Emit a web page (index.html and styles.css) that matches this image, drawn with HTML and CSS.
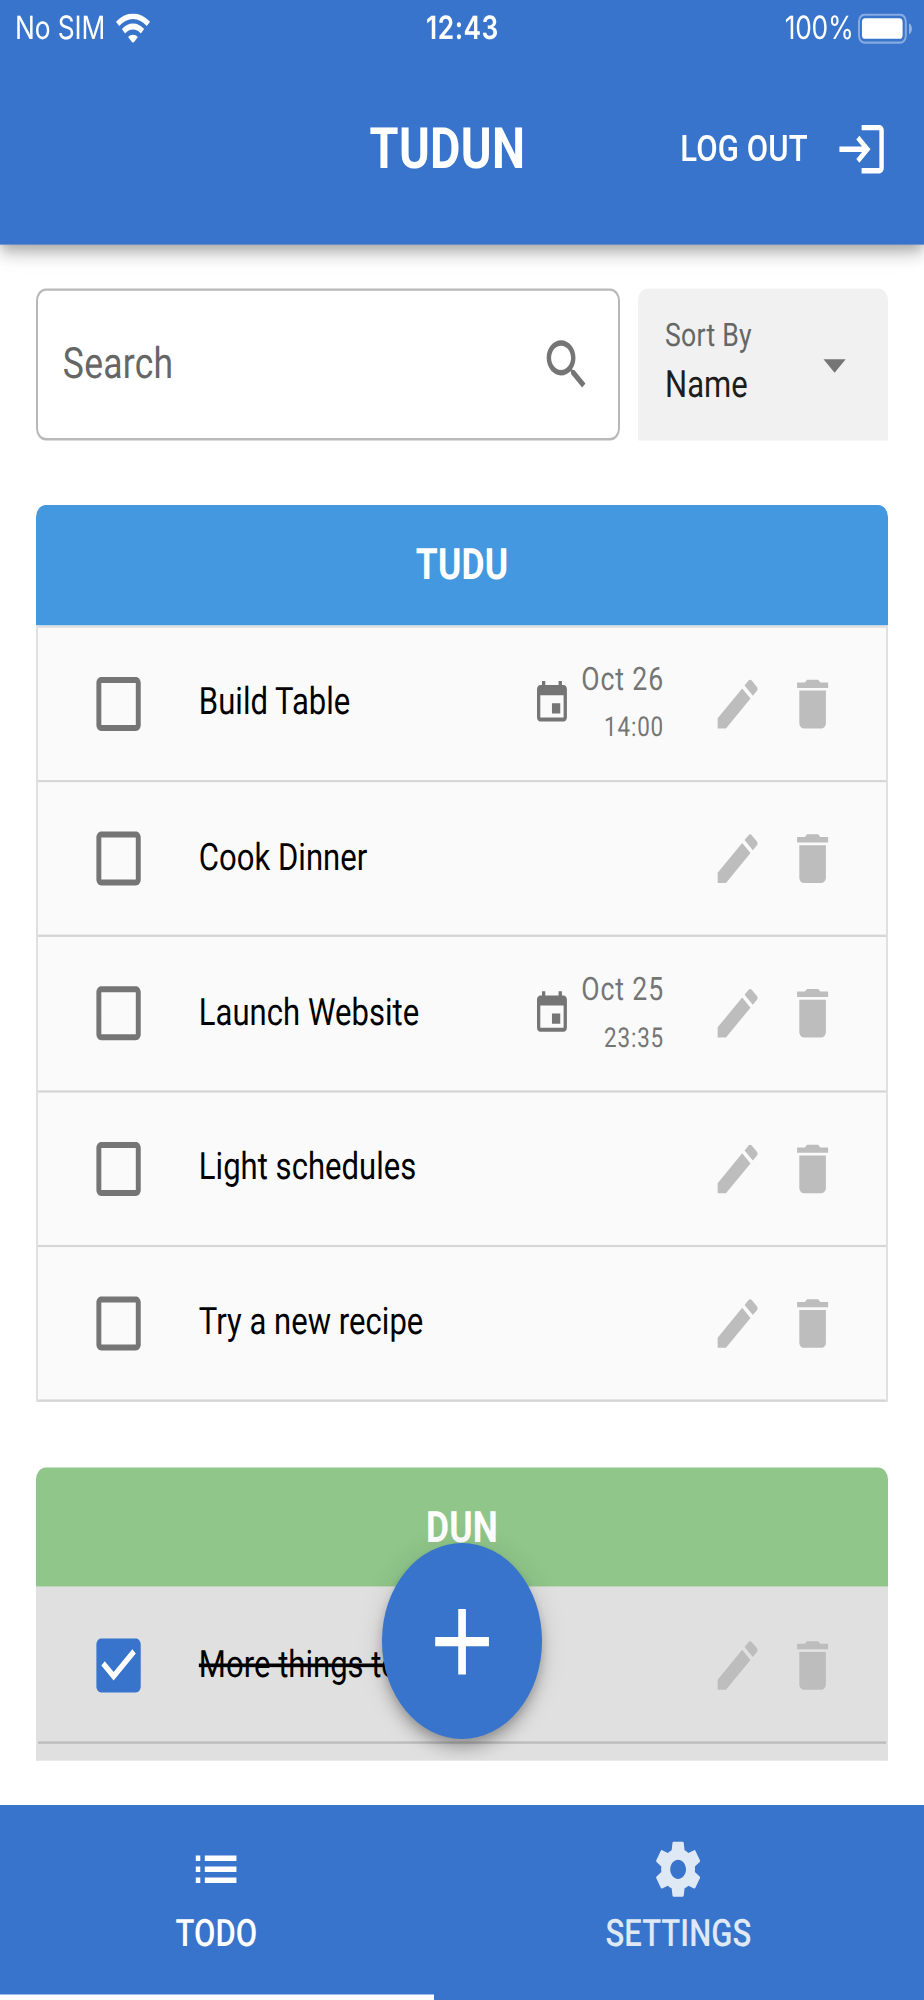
FILE: index.html
```html
<!DOCTYPE html>
<html lang="en">
<head>
<meta charset="utf-8">
<title>TUDUN</title>
<link rel="stylesheet" href="styles.css">
</head>
<body>
<svg class="sprite" xmlns="http://www.w3.org/2000/svg">
  <symbol id="box" viewBox="0 0 24 24"><path d="M19 5v14H5V5h14m0-2H5c-1.1 0-2 .9-2 2v14c0 1.1.9 2 2 2h14c1.1 0 2-.9 2-2V5c0-1.1-.9-2-2-2z"/></symbol>
  <symbol id="box-checked" viewBox="0 0 24 24"><path fill="#fff" d="M4 4h16v16H4z"/><path d="M19 3H5c-1.11 0-2 .9-2 2v14c0 1.1.89 2 2 2h14c1.11 0 2-.9 2-2V5c0-1.1-.89-2-2-2zm-9 14l-5-5 1.41-1.41L10 14.17l7.59-7.59L19 8l-9 9z"/></symbol>
  <symbol id="edit" viewBox="0 0 24 24"><path d="M3 17.25V21h3.75L17.81 9.94l-3.75-3.75L3 17.25zM20.71 7.04c.39-.39.39-1.02 0-1.41l-2.34-2.34c-.39-.39-1.02-.39-1.41 0l-1.83 1.83 3.75 3.75 1.83-1.83z"/></symbol>
  <symbol id="delete" viewBox="0 0 24 24"><path d="M6 19c0 1.1.9 2 2 2h8c1.1 0 2-.9 2-2V7H6v12zM19 4h-3.5l-1-1h-5l-1 1H5v2h14V4z"/></symbol>
  <symbol id="event" viewBox="0 0 24 24"><path d="M17 12h-5v5h5v-5zM16 1v2H8V1H6v2H5c-1.11 0-1.99.9-1.99 2L3 19c0 1.1.89 2 2 2h14c1.1 0 2-.9 2-2V5c0-1.1-.9-2-2-2h-1V1h-2zm3 18H5V8h14v11z"/></symbol>
</svg>
<div class="viewport">
<div class="app">
  <header class="appbar">
    <div class="status">
      <div class="status-left">
        <span class="carrier">No SIM</span>
        <svg class="wifi" viewBox="0 0 13.8 10"><path d="M6.9 10L4.9 7.9a2.9 2.9 0 0 1 4 0z"/><path d="M2.4 5.2a6.5 6.5 0 0 1 9 0L10.1 6.7a4.6 4.6 0 0 0-6.4 0z"/><path d="M0 2.8a10 10 0 0 1 13.8 0L12.5 4.2a8 8 0 0 0-11.2 0z"/></svg>
      </div>
      <span class="clock">12:43</span>
      <div class="status-right">
        <span class="percent">100%</span>
        <svg class="battery" viewBox="0 0 22 10.2"><rect x=".4" y=".4" width="19" height="9.4" rx="2.3" fill="none" stroke="#fff" stroke-opacity=".4" stroke-width=".8"/><rect x="1.6" y="1.6" width="16.5" height="6.9" rx="1.3"/><path d="M20.7 3.3c1.6.7 1.6 3 0 3.7z" fill-opacity=".45"/></svg>
      </div>
    </div>
    <div class="toolbar">
      <h1 class="title">TUDUN</h1>
      <button class="logout"><span>LOG OUT</span><svg class="icon" viewBox="0 0 24 24"><path d="M11 7L9.6 8.4l2.6 2.6H2v2h10.2l-2.6 2.6L11 17l5-5-5-5zm9 12h-8v2h8c1.1 0 2-.9 2-2V5c0-1.1-.9-2-2-2h-8v2h8v14z"/></svg></button>
    </div>
  </header>

  <main class="content">
    <div class="filters">
      <div class="search">
        <span>Search</span>
        <svg class="icon" viewBox="0 0 24 24"><path d="M15.5 14h-.79l-.28-.27C15.41 12.59 16 11.11 16 9.5 16 5.91 13.09 3 9.5 3S3 5.91 3 9.5 5.91 16 9.5 16c1.61 0 3.09-.59 4.23-1.57l.27.28v.79l5 4.99L20.49 19l-4.99-5zm-6 0C7.01 14 5 11.99 5 9.5S7.01 5 9.5 5 14 7.01 14 9.5 11.99 14 9.5 14z"/></svg>
      </div>
      <div class="sort">
        <div class="sort-text"><span class="sort-label">Sort By</span><span class="sort-value">Name</span></div>
        <svg class="icon" viewBox="0 0 24 24"><path d="M7 10l5 5 5-5z"/></svg>
      </div>
    </div>

    <section class="panel">
      <h2 class="panel-title">TUDU</h2>
      <ul class="tasks">
        <li class="task"><svg class="check"><use href="#box"/></svg><span class="name">Build Table</span><svg class="event"><use href="#event"/></svg><div class="due"><span class="date">Oct 26</span><span class="time">14:00</span></div><div class="actions"><svg class="icon"><use href="#edit"/></svg><svg class="icon"><use href="#delete"/></svg></div></li>
        <li class="task"><svg class="check"><use href="#box"/></svg><span class="name">Cook Dinner</span><div class="actions"><svg class="icon"><use href="#edit"/></svg><svg class="icon"><use href="#delete"/></svg></div></li>
        <li class="task"><svg class="check"><use href="#box"/></svg><span class="name">Launch Website</span><svg class="event"><use href="#event"/></svg><div class="due"><span class="date">Oct 25</span><span class="time">23:35</span></div><div class="actions"><svg class="icon"><use href="#edit"/></svg><svg class="icon"><use href="#delete"/></svg></div></li>
        <li class="task"><svg class="check"><use href="#box"/></svg><span class="name">Light schedules</span><div class="actions"><svg class="icon"><use href="#edit"/></svg><svg class="icon"><use href="#delete"/></svg></div></li>
        <li class="task"><svg class="check"><use href="#box"/></svg><span class="name">Try a new recipe</span><div class="actions"><svg class="icon"><use href="#edit"/></svg><svg class="icon"><use href="#delete"/></svg></div></li>
      </ul>
    </section>

    <section class="panel panel-done">
      <h2 class="panel-title">DUN</h2>
      <ul class="tasks">
        <li class="task"><svg class="check checked"><use href="#box-checked"/></svg><span class="name">More things to do</span><div class="actions"><svg class="icon"><use href="#edit"/></svg><svg class="icon"><use href="#delete"/></svg></div></li>
      </ul>
    </section>
  </main>

  <button class="fab" aria-label="Add"><svg viewBox="0 0 24 24"><path d="M19 13h-6v6h-2v-6H5v-2h6V5h2v6h6v2z"/></svg></button>

  <nav class="tabs">
    <div class="tab tab-active"><svg class="tab-icon" viewBox="0 0 24 24"><path d="M3 13h2v-2H3v2zm0 4h2v-2H3v2zm0-8h2V7H3v2zm4 4h14v-2H7v2zm0 4h14v-2H7v2zM7 7v2h14V7H7z"/></svg><span>TODO</span></div>
    <div class="tab"><svg class="tab-icon" viewBox="0 0 24 24"><path d="M19.43 12.98c.04-.32.07-.64.07-.98s-.03-.66-.07-.98l2.11-1.65c.19-.15.24-.42.12-.64l-2-3.46c-.12-.22-.39-.3-.61-.22l-2.49 1c-.52-.4-1.08-.73-1.69-.98l-.38-2.65C14.46 2.18 14.25 2 14 2h-4c-.25 0-.46.18-.49.42l-.38 2.65c-.61.25-1.17.59-1.69.98l-2.49-1c-.23-.09-.49 0-.61.22l-2 3.46c-.13.22-.07.49.12.64l2.11 1.65c-.04.32-.07.65-.07.98s.03.66.07.98l-2.11 1.65c-.19.15-.24.42-.12.64l2 3.46c.12.22.39.3.61.22l2.49-1c.52.4 1.08.73 1.69.98l.38 2.65c.03.24.24.42.49.42h4c.25 0 .46-.18.49-.42l.38-2.65c.61-.25 1.17-.59 1.69-.98l2.49 1c.23.09.49 0 .61-.22l2-3.46c.12-.22.07-.49-.12-.64l-2.11-1.65zM12 15.5c-1.93 0-3.5-1.57-3.5-3.5s1.57-3.5 3.5-3.5 3.5 1.57 3.5 3.5-1.57 3.5-3.5 3.5z"/></svg><span>SETTINGS</span></div>
  </nav>
</div>
</div>
</body>
</html>
```

FILE: styles.css
```css
* { box-sizing: border-box; margin: 0; padding: 0; }

body { background: #fff; }

.sprite { display: none; }

.viewport { width: 924px; height: 2000px; overflow: hidden; }

.app {
  position: relative;
  display: flex;
  flex-direction: column;
  width: 375px;
  height: 667.2px;
  background: #fff;
  font-family: Roboto, "Liberation Sans", sans-serif;
  text-rendering: geometricPrecision;
  zoom: 2.464;
  transform: scaleY(1.2169);
  transform-origin: 0 0;
}

svg { display: block; flex: none; fill: currentColor; }
button { border: 0; background: none; color: inherit; font: inherit; }
.icon { width: 21.6px; height: 21.6px; }

/* App bar */
.appbar {
  flex: none;
  height: 81.6px;
  background: #3874cb;
  color: #fff;
  z-index: 1;
  box-shadow: 0 2px 4px -1px rgba(0, 0, 0, .2), 0 4px 5px rgba(0, 0, 0, .14), 0 1px 10px rgba(0, 0, 0, .12);
}
.status {
  display: grid;
  grid-template-columns: 1fr auto 1fr;
  align-items: center;
  height: 17.2px;
  padding: 2.2px 4.8px 0 6.1px;
  font: 10.7px/15px Inter, Roboto, sans-serif;
}
.status-left, .status-right { display: flex; align-items: center; }
.status-right { justify-content: flex-end; }
.carrier { letter-spacing: -.05px; }
.wifi { width: 13.8px; height: 10px; margin-left: 4.2px; margin-top: -.6px; }
.clock { margin-left: -.9px; font-weight: 600; letter-spacing: .2px; }
.percent { letter-spacing: -.1px; }
.battery { width: 22px; height: 10.2px; margin-left: 1.8px; margin-top: -.4px; }

.toolbar {
  display: flex;
  align-items: center;
  justify-content: space-between;
  height: 64.4px;
  padding: 0 14.7px 0 150px;
}
.title { margin-top: 1.6px; font-size: 19px; font-weight: 700; line-height: 24px; letter-spacing: .13px; }
.logout {
  display: flex;
  align-items: center;
  gap: 10.9px;
  font-size: 12.6px;
  font-weight: 500;
  line-height: 24px;
  letter-spacing: .05px;
}
.logout span { margin-bottom: .2px; }
.logout .icon { margin-top: .8px; }

/* Content */
.content { flex: none; height: 505.7px; padding: 14.5px 14.6px 0; overflow: hidden; }

.filters { display: flex; gap: 7.1px; height: 50.8px; }
.search {
  display: flex;
  align-items: center;
  justify-content: space-between;
  width: 237.2px;
  padding: 0 13.3px 0 10.1px;
  border: .9px solid #b8b8b8;
  border-radius: 4px;
  color: #666;
  font-size: 14.4px;
  letter-spacing: .1px;
}
.search .icon { margin-right: -3px; color: #757575; }
.sort {
  display: flex;
  align-items: center;
  justify-content: space-between;
  flex: 1;
  padding: 0 10.8px 0 11px;
  border-radius: 4px 4px 0 0;
  background: #f1f1f1;
  color: #757575;
}
.sort-text { display: flex; flex-direction: column; margin-bottom: 2.2px; }
.sort-label { font-size: 10.8px; line-height: 16px; letter-spacing: .1px; color: #666; }
.sort-value { font-size: 12.6px; line-height: 17px; color: #1d1d1d; }

.panel { margin-top: 21.7px; }
.panel-title {
  height: 39.9px;
  border-radius: 4px 4px 0 0;
  background: #4498e0;
  color: #fff;
  font-size: 14.4px;
  font-weight: 700;
  line-height: 39.9px;
  letter-spacing: .08px;
  text-align: center;
}
.tasks { list-style: none; border: solid #e0e0e0; border-width: .9px .9px 0; }
.task {
  display: flex;
  align-items: center;
  height: 51.66px;
  padding: 0 19px 0 20.8px;
  border-bottom: .9px solid #d6d6d6;
  background: #fafafa;
}
.check { width: 24px; height: 24px; color: #757575; }
.checked { color: #3874cb; }
.name { flex: 1; margin: 0 0 1.2px 20.5px; color: #000; font-size: 12.6px; letter-spacing: .01px; }
.event { width: 16.2px; height: 16.2px; margin-right: 3.8px; color: #757575; }
.due { display: flex; flex-direction: column; align-items: flex-end; margin: .8px 19px 0 0; color: #757575; line-height: 16.2px; }
.date { font-size: 10.8px; letter-spacing: .36px; }
.time { font-size: 9.1px; letter-spacing: .34px; }
.actions { display: flex; gap: 8.9px; color: #bdbdbd; }

.panel-done .panel-title { background: #90c68a; }
.panel-done .tasks { height: 60px; background: #e0e0e0; }
.panel-done .task { border-bottom-color: #bdbdbd; background: #e0e0e0; }
.panel-done .name { text-decoration: line-through; }

/* Floating action button, over the list */
.fab {
  position: absolute;
  left: 154.9px;
  top: 514.7px;
  z-index: 2;
  display: flex;
  align-items: center;
  justify-content: center;
  width: 65.2px;
  height: 65.4px;
  border-radius: 50%;
  background: #3874cb;
  color: #fff;
  box-shadow: 0 2px 4px -1px rgba(0, 0, 0, .2), 0 4px 5px rgba(0, 0, 0, .14), 0 1px 10px rgba(0, 0, 0, .12);
}
.fab svg { width: 37.4px; height: 37.4px; margin-top: .4px; }

/* Bottom tabs; the white strip on top cuts off the button's shadow */
.tabs {
  display: flex;
  height: 79.9px;
  margin-top: auto;
  border-top: 14.7px solid #fff;
  z-index: 3;
  background: #3874cb;
  background-clip: padding-box;
  color: #dfe9f6;
  font-size: 12.6px;
  font-weight: 500;
  line-height: 20px;
  letter-spacing: .02px;
}
.tab { display: flex; flex: 1; flex-direction: column; align-items: center; padding: 10.7px .5px 0 0; }
.tab-active { flex: none; width: 176.1px; border-bottom: 2.2px solid #fff; color: #fff; }
.tab-icon { width: 22px; height: 22px; margin-bottom: .1px; }
```
